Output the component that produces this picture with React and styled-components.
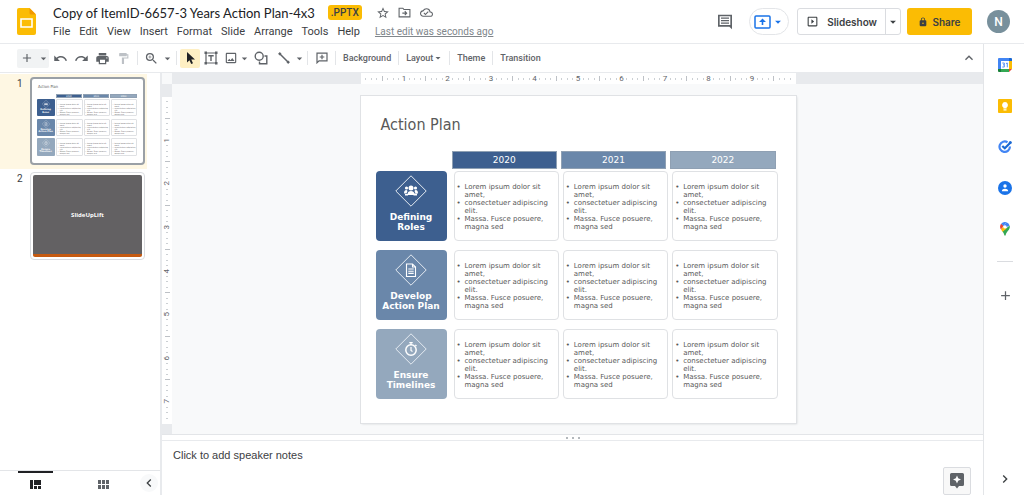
import React, { useState } from 'react';
import styled, { createGlobalStyle, css } from 'styled-components';
import {
  MdAdd,
  MdArrowDropDown,
  MdUndo,
  MdRedo,
  MdPrint,
  MdFormatPaint,
  MdZoomIn,
  MdOutlineImage,
  MdStarBorder,
  MdOutlineCloudDone,
  MdKeyboardArrowUp,
  MdChevronLeft,
  MdChevronRight,
  MdLock,
  MdOutlineSlideshow,
} from 'react-icons/md';

const GlobalStyle = createGlobalStyle`
  * {
    box-sizing: border-box;
  }
  body {
    margin: 0;
    background: #fff;
    color: #3c4043;
    font-family: Roboto, sans-serif;
  }
  button {
    border: none;
    padding: 0;
    margin: 0;
    background: none;
    color: inherit;
    font: inherit;
    cursor: pointer;
  }
  svg {
    display: block;
    flex-shrink: 0;
  }
`;

const Page = styled.div`
  display: flex;
  flex-direction: column;
  height: 100vh;
  overflow: hidden;
`;

// ---- Header ----
const Header = styled.header`
  display: flex;
  align-items: center;
  height: 44px;
  padding: 0 14px 0 17px;
  border-bottom: 1px solid #e8eaed;
  flex-shrink: 0;
`;

const DocInfo = styled.div`
  flex: 1;
  min-width: 0;
  padding-left: 17px;
`;

const TitleRow = styled.div`
  display: flex;
  align-items: center;
  height: 20px;
  white-space: nowrap;
`;

const DocTitle = styled.h1`
  margin: 0;
  font-family: Lato, sans-serif;
  font-size: 13px;
  font-weight: 400;
  line-height: 20px;
  color: #202124;
`;

const FileBadge = styled.span`
  margin: 0 14px 0 13px;
  padding: 0 3px;
  border-radius: 3px;
  background: #fbbc04;
  color: #3c4043;
  font-size: 10px;
  font-weight: 500;
  line-height: 15px;
`;

const TitleAction = styled.button`
  width: 14px;
  margin-right: 8px;
  color: #5f6368;
`;

const MenuRow = styled.nav`
  display: flex;
  align-items: center;
  gap: 9px;
  height: 18px;
  font-size: 11px;
  line-height: 18px;
  white-space: nowrap;
`;

const LastEdit = styled.a`
  margin-left: 6px;
  color: #80868b;
  font-size: 10px;
  text-decoration: underline;
`;

const HeaderActions = styled.div`
  display: flex;
  align-items: center;
  gap: 6px;
  color: #3c4043;
  font-family: Inter, sans-serif;
  font-size: 10px;
  font-weight: 600;
`;

const CommentButton = styled.button`
  margin-right: 10px;
  color: #5f6368;
`;

const PresentButton = styled.button`
  display: flex;
  align-items: center;
  justify-content: center;
  width: 40px;
  height: 27px;
  margin-right: 2px;
  border: 1px solid #e3e5e8;
  border-radius: 14px;
  color: #1a73e8;
`;

const SplitButton = styled.div`
  display: flex;
  height: 27px;
  border: 1px solid #dadce0;
  border-radius: 3px;
`;

const SlideshowButton = styled.button`
  display: flex;
  align-items: center;
  gap: 8px;
  padding: 0 8px;
`;

const SlideshowMenuButton = styled.button`
  display: flex;
  align-items: center;
  justify-content: center;
  width: 15px;
  border-left: 1px solid #dadce0;
`;

const ShareButton = styled.button`
  display: flex;
  align-items: center;
  justify-content: center;
  gap: 4px;
  width: 65px;
  height: 27px;
  border-radius: 3px;
  background: #fbbc04;
`;

const Avatar = styled.button`
  width: 23px;
  height: 23px;
  margin-left: 9px;
  border-radius: 50%;
  background: #78909c;
  color: #fff;
  font-family: Roboto, sans-serif;
  font-size: 12px;
  font-weight: 500;
`;

// ---- Toolbar ----
const Body = styled.div`
  display: flex;
  flex: 1;
  min-height: 0;
`;

const Main = styled.div`
  display: flex;
  flex-direction: column;
  flex: 1;
  min-width: 0;
`;

const Toolbar = styled.div`
  display: flex;
  align-items: center;
  height: 29px;
  padding: 0 6px 0 17px;
  border-bottom: 1px solid #e8eaed;
  color: #5f6368;
  font-size: 9px;
  font-weight: 500;
  flex-shrink: 0;
`;

const ToolButton = styled.button`
  display: flex;
  align-items: center;
  justify-content: center;
  width: ${(props) => props.$width || 21}px;
  height: 19px;
  border-radius: 2px;
  color: ${(props) => (props.$faded ? '#bdc1c6' : '#5f6368')};
  background: ${(props) => props.$background || 'none'};
`;

const NewSlide = styled.div`
  display: flex;
  margin-right: 1px;
  background: #f1f3f4;
  border-radius: 2px;
`;

const Separator = styled.span`
  width: 1px;
  height: 14px;
  margin: 0 3px;
  background: #e3e5e8;
`;

const TextTool = styled.button`
  display: flex;
  align-items: center;
  height: 19px;
  padding: 0 4px;
  svg {
    margin: 0 -2px 0 -1px;
  }
`;

const Spacer = styled.span`
  flex: 1;
`;

// ---- Filmstrip ----
const Filmstrip = styled.aside`
  display: flex;
  flex-direction: column;
  width: 162px;
  border-right: 2px solid #e8eaed;
  flex-shrink: 0;
`;

const ThumbList = styled.div`
  flex: 1;
  padding-top: 1px;
  overflow: hidden;
`;

const ThumbRow = styled.div`
  display: flex;
  align-items: flex-start;
  width: 147px;
  height: 95px;
  padding-top: 3px;
  background: ${(props) => (props.$selected ? '#fef7e3' : 'none')};
`;

const ThumbNumber = styled.span`
  width: 30px;
  padding-left: 17px;
  font-size: 10px;
  line-height: 14px;
  color: #3c4043;
`;

const ThumbFrame = styled.button`
  padding: ${(props) => (props.$selected ? 1 : 2)}px;
  border: ${(props) => (props.$selected ? '2px solid #9aa0a6' : '1px solid #dadce0')};
  border-radius: 4px;
  background: #fff;
  text-align: left;
`;

const ThumbCanvas = styled.div`
  width: 109px;
  height: 82px;
  overflow: hidden;
`;

const MiniScale = styled.div`
  zoom: 0.25;
`;

const BrandSlide = styled.div`
  display: flex;
  align-items: center;
  justify-content: center;
  height: 100%;
  border-bottom: 3px solid #c55a11;
  border-radius: 2px;
  background: #636163;
  color: #fff;
  font-family: 'Open Sans', sans-serif;
  font-size: 6px;
  font-weight: 700;
`;

const ViewSwitch = styled.div`
  display: flex;
  align-items: center;
  gap: 34px;
  height: 25px;
  border-top: 1px solid #e3e5e8;
  padding-left: 18px;
`;

const ViewButton = styled.button`
  display: flex;
  align-items: center;
  justify-content: center;
  width: 35px;
  height: 25px;
  border-top: 2px solid ${(props) => (props.$active ? '#202124' : 'transparent')};
  color: ${(props) => (props.$active ? '#202124' : '#5f6368')};
`;

const CollapseButton = styled.button`
  display: flex;
  align-items: center;
  justify-content: center;
  width: 18px;
  height: 18px;
  margin: 0 2px 0 -15px;
  border-radius: 50%;
  background: #f8f9fa;
  color: #3c4043;
`;

// ---- Canvas and rulers ----
const Workspace = styled.div`
  display: flex;
  flex: 1;
  min-height: 0;
`;

const Editor = styled.main`
  display: flex;
  flex-direction: column;
  flex: 1;
  min-width: 0;
`;

const CanvasGrid = styled.div`
  display: grid;
  grid-template-columns: 10px 1fr;
  grid-template-rows: 11px 1fr;
  flex: 1;
  min-height: 0;
  background: #f8f9fa;
`;

const RulerTrack = styled.div`
  display: flex;
  flex-direction: ${(props) => (props.$vertical ? 'column' : 'row')};
  justify-content: center;
  min-width: 0;
  min-height: 0;
  padding: ${(props) => (props.$vertical ? '2px 0 0' : '0 0 0 1px')};
  background: #e8eaed;
`;

const RulerScale = styled.div`
  display: grid;
  background: #fff;
  color: #5f6368;
  font-size: 8px;
  line-height: 10px;
  ${(props) =>
    props.$vertical
      ? css`
          grid-template-rows: 1fr repeat(59, 2fr) 1fr;
          height: 327px;
        `
      : css`
          grid-template-columns: 1fr repeat(79, 2fr) 1fr;
          width: 435px;
        `}
`;

const RulerSlot = styled.span`
  display: flex;
  align-items: center;
  justify-content: center;
  min-width: 0;
  min-height: 0;
  ${(props) => props.$vertical && 'writing-mode: sideways-lr; height: 100%;'}
`;

const Tick = styled.i`
  background: ${(props) => (props.$long ? '#bdc1c6' : '#ccd0d4')};
  width: ${(props) => (props.$vertical ? (props.$long ? 5 : 2) : 1)}px;
  height: ${(props) => (props.$vertical ? 1 : props.$long ? 5 : 2)}px;
  flex-shrink: 0;
`;

const Stage = styled.div`
  display: flex;
  align-items: center;
  justify-content: center;
  min-height: 0;
  padding: 1px 0 0 1px;
  overflow: hidden;
`;

const Splitter = styled.div`
  display: flex;
  align-items: center;
  justify-content: center;
  gap: 4px;
  height: 7px;
  border-top: 1px solid #e3e5e8;
  border-bottom: 1px solid #e8eaed;
  flex-shrink: 0;
`;

const GripDot = styled.i`
  width: 2px;
  height: 2px;
  border-radius: 50%;
  background: #9aa0a6;
`;

const Notes = styled.section`
  display: flex;
  align-items: flex-start;
  justify-content: space-between;
  height: 54px;
  padding: 0 12px 0 11px;
  flex-shrink: 0;
`;

const NotesInput = styled.textarea`
  flex: 1;
  height: 40px;
  padding: 8px 0;
  border: none;
  outline: none;
  resize: none;
  font-family: 'Liberation Sans', sans-serif;
  font-size: 11px;
  line-height: 13px;
  &::placeholder {
    color: #3c4043;
  }
`;

const ExploreButton = styled.button`
  display: flex;
  align-items: center;
  justify-content: center;
  align-self: flex-end;
  width: 28px;
  height: 28px;
  border: 1px solid #dadce0;
  border-radius: 2px;
  background: #f8f8f8;
  color: #5f6368;
`;

// ---- Slide ----
const SlidePaper = styled.article`
  width: 435px;
  aspect-ratio: 4 / 3;
  padding: 17px 16px 0 15px;
  background: #fff;
  box-shadow: ${(props) => (props.$flat ? 'none' : '0 0 0 1px #e0e2e5, 1px 1px 2px #d0d3d6')};
  color: #595959;
  font-family: 'DejaVu Sans', sans-serif;
`;

const SlideTitle = styled.h2`
  margin: 0 0 15px 5px;
  font-family: 'DejaVu Sans Condensed', 'DejaVu Sans', sans-serif;
  font-size: 16px;
  font-weight: 400;
  line-height: 23px;
`;

const PlanTable = styled.table`
  width: 100%;
  table-layout: fixed;
  border-collapse: collapse;
  th,
  td {
    padding: 0;
  }
`;

const PhaseColumn = styled.col`
  width: 76px;
`;

const YearHeading = styled.div`
  height: 18px;
  margin: 0 4px 2px 0;
  border: 1px solid #8fa0b3;
  background: ${(props) => props.$color};
  color: #fff;
  font-size: 9px;
  font-weight: 400;
  line-height: 17px;
  text-align: center;
`;

const Phase = styled.div`
  display: flex;
  flex-direction: column;
  align-items: center;
  width: 71px;
  height: 70px;
  margin-bottom: 9px;
  padding-top: 4px;
  border-radius: 4px;
  background: ${(props) => props.$color};
  color: #fff;
  font-size: 9px;
  font-weight: 700;
  line-height: 10px;
  text-align: center;
  white-space: pre-line;
  svg {
    margin-bottom: 5px;
  }
`;

const Card = styled.div`
  height: 70px;
  margin: 0 2px 9px 2px;
  padding: 11px 0 0 10px;
  border: 1px solid #dfe1e4;
  border-radius: 4px;
`;

const Bullets = styled.ul`
  margin: 0;
  padding: 0;
  list-style: none;
  font-size: 7px;
  line-height: 8px;
  white-space: pre-line;
`;

const Bullet = styled.li`
  display: flex;
  &::before {
    content: '•';
    width: 8px;
    margin-left: -8px;
  }
`;

// ---- Side panel ----
const SidePanel = styled.aside`
  display: flex;
  flex-direction: column;
  align-items: center;
  width: 41px;
  padding: 13px 0 8px 2px;
  border-left: 1px solid #e3e5e8;
  flex-shrink: 0;
`;

const PanelButton = styled.button`
  display: flex;
  align-items: center;
  justify-content: center;
  height: 16px;
  margin-bottom: 25px;
  color: #5f6368;
`;

const PanelDivider = styled.span`
  width: 16px;
  height: 1px;
  margin: -1px 0 25px;
  background: #dadce0;
`;

function SlidesLogo() {
  return (
    <svg width="19" height="27" viewBox="0 0 19 27">
      <path fill="#fbbc04" d="M2 0h10.500L19 6.500V25a2 2 0 0 1-2 2H2a2 2 0 0 1-2-2V2a2 2 0 0 1 2-2z" />
      <path fill="#f29900" d="M12.500 0 19 6.500h-5a1.500 1.500 0 0 1-1.500-1.500z" />
      <path fill="none" stroke="#fff" strokeWidth="1.600" d="M4 11h11v8H4z" />
    </svg>
  );
}

function MoveFolderIcon() {
  return (
    <svg width="13" height="13" viewBox="0 0 24 24" fill="none" stroke="currentColor" strokeWidth="2">
      <path d="M2 4h7l2 2.500h11V20H2z" />
      <path d="M8 13.200h7M12.500 9.700l3.500 3.500-3.500 3.500" />
    </svg>
  );
}

function CommentIcon() {
  return (
    <svg width="16" height="16" viewBox="0 0 24 24" fill="currentColor">
      <path d="M1.500 1h21V23l-4-4h-17zM4 3.500V16.500h16V3.500z" fillRule="evenodd" />
      <path d="M6 5.300h12v2H6zM6 9h12v2H6zM6 12.700h12v2H6z" />
    </svg>
  );
}

function PresentIcon() {
  return (
    <svg width="17" height="14" viewBox="0 0 17 14">
      <rect x="1" y="1" width="15" height="12" rx="1" fill="none" stroke="currentColor" strokeWidth="1.500" />
      <path fill="currentColor" d="M8.500 3.500 12 7H9.300v3H7.700V7H5z" />
    </svg>
  );
}

function CursorIcon() {
  return (
    <svg width="11" height="14" viewBox="0 0 11 14">
      <path fill="#202124" d="M2 1v10.500l2.500-2.300 1.700 3.800 1.800-.8-1.700-3.700H10z" />
    </svg>
  );
}

function TextBoxIcon() {
  return (
    <svg width="14" height="14" viewBox="0 0 14 14" fill="none" stroke="currentColor">
      <path strokeWidth="1.200" d="M2 2h10v10H2z" />
      <path strokeWidth="1.400" d="M4.300 4.700h5.400M7 4.700V10" />
      <path fill="currentColor" stroke="none" d="M.5.500h2.500v2.500H.5zM11 .5h2.500v2.500H11zM.5 11h2.500v2.500H.5zM11 11h2.500v2.500H11z" />
    </svg>
  );
}

function ShapeIcon() {
  return (
    <svg width="14" height="14" viewBox="0 0 14 14" fill="none" stroke="currentColor" strokeWidth="1.400">
      <circle cx="5.200" cy="5.200" r="4" />
      <path d="M10.500 5H12.800v7.800H5.500v-2.200" />
    </svg>
  );
}

function LineIcon() {
  return (
    <svg width="12" height="12" viewBox="0 0 12 12" stroke="currentColor" fill="currentColor">
      <path strokeWidth="1.500" d="M1.500 1.500 10.500 10.500" />
      <circle cx="1.800" cy="1.800" r="1" />
      <circle cx="10.200" cy="10.200" r="1" />
    </svg>
  );
}

function AddCommentIcon() {
  return (
    <svg width="12" height="12" viewBox="0 0 12 12" fill="none" stroke="currentColor">
      <path strokeWidth="1.200" d="M1 1.200h10v7.600H3L1 10.800z" />
      <path strokeWidth="1.200" d="M6 2.700v4.600M3.700 5h4.600" />
    </svg>
  );
}

function FilmstripIcon() {
  return (
    <svg width="11" height="9" viewBox="0 0 11 9" fill="currentColor">
      <path d="M0 0h3v9H0zM4 0h7v5H4zM4 6h3v3H4zM8 6h3v3H8z" />
    </svg>
  );
}

function GridIcon() {
  return (
    <svg width="11" height="9" viewBox="0 0 11 9" fill="currentColor">
      <path d="M0 0h3v4H0zM4 0h3v4H4zM8 0h3v4H8zM0 5h3v4H0zM4 5h3v4H4zM8 5h3v4H8z" />
    </svg>
  );
}

function ExploreIcon() {
  return (
    <svg width="14" height="16" viewBox="0 0 14 16">
      <path fill="currentColor" d="M1.500 0h11A1.500 1.500 0 0 1 14 1.500v10a1.500 1.500 0 0 1-1.500 1.500H9l-2 2.500L5 13H1.500A1.500 1.500 0 0 1 0 11.500v-10A1.500 1.500 0 0 1 1.500 0z" />
      <path fill="#fff" d="m7 2.500 1.200 2.800L11 6.500 8.200 7.700 7 10.500 5.800 7.700 3 6.500l2.800-1.200z" />
    </svg>
  );
}

function PhaseIcon({ kind }) {
  return (
    <svg width="32" height="32" viewBox="0 0 32 32">
      <path d="M16 .8 31.200 16 16 31.200.8 16z" fill="none" stroke="#e3e9f0" strokeWidth="1" />
      {kind === 'team' && (
        <g fill="#fff">
          <circle cx="16" cy="13" r="2.500" />
          <circle cx="11.500" cy="13" r="1.600" />
          <circle cx="20.500" cy="13" r="1.600" />
          <path d="M12.500 19c0-4 7-4 7 0v1h-7zM9 18.500c0-4 3-4 3.500-2.500l-1 2.500zM23 18.500c0-4-3-4-3.500-2.500l1 2.500z" />
          <path d="M10 19h3v1.500h-3zM18.500 18.500h3.500v2h-3.500z" />
        </g>
      )}
      {kind === 'document' && (
        <g fill="none" stroke="#fff" strokeWidth="1.100">
          <path d="M11.500 10h6l3 3v9.500h-9z" />
          <path d="M17.500 10v3h3M13.300 15h5.400M13.300 17.200h5.400M13.300 19.400h5.400" />
        </g>
      )}
      {kind === 'timer' && (
        <g fill="none" stroke="#fff">
          <circle cx="16" cy="17" r="5.200" strokeWidth="1.500" />
          <path strokeWidth="1.200" d="M14.300 9.700h3.400M16 10v2M16 14v3.500l1.500 1M20.300 11.800l1.200 1.200" />
        </g>
      )}
    </svg>
  );
}

function CalendarIcon() {
  return (
    <svg width="14" height="14" viewBox="0 0 14 14">
      <path fill="#4285f4" d="M1 0h10v3H3v8H0V1a1 1 0 0 1 1-1z" />
      <path fill="#1967d2" d="M11 0h2a1 1 0 0 1 1 1v2h-3z" />
      <path fill="#fbbc04" d="M11 3h3v8h-3z" />
      <path fill="#34a853" d="M3 11h8v3H3z" />
      <path fill="#188038" d="M0 11h3v3H1a1 1 0 0 1-1-1z" />
      <path fill="#ea4335" d="M11 11h3l-3 3z" />
      <path fill="#fff" d="M3 3h8v8H3z" />
      <path fill="none" stroke="#4285f4" strokeWidth=".9" d="M4.300 5h2v1.800H5M6.300 6.800V9h-2M8 5.600 9.300 5v4.300" />
    </svg>
  );
}

function KeepIcon() {
  return (
    <svg width="14" height="14" viewBox="0 0 14 14">
      <rect width="14" height="14" rx="1" fill="#fbbc04" />
      <path fill="#fff" d="M7 3a3 3 0 0 1 1.600 5.500V9.500H5.400V8.500A3 3 0 0 1 7 3zM5.500 10.300h3v1.200h-3z" />
    </svg>
  );
}

function TasksIcon() {
  return (
    <svg width="14" height="14" viewBox="0 0 14 14" fill="none">
      <path stroke="#4285f4" strokeWidth="2.200" d="M9.500 2.300A5.200 5.200 0 1 0 11.900 6.500" />
      <path stroke="#1967d2" strokeWidth="2.200" d="M4.300 6l2.500 2.300 5.500-5.500" />
      <circle cx="12.300" cy="2.500" r="1.500" fill="#1967d2" />
    </svg>
  );
}

function ContactsIcon() {
  return (
    <svg width="14" height="14" viewBox="0 0 14 14">
      <circle cx="7" cy="7" r="7" fill="#1a73e8" />
      <circle cx="7" cy="5" r="1.700" fill="#fff" />
      <path fill="#fff" d="M3.800 10.300c0-3.300 6.400-3.300 6.400 0z" />
    </svg>
  );
}

function MapsIcon() {
  return (
    <svg width="10" height="14" viewBox="0 0 10 14">
      <path fill="#34a853" d="M9.600 3.600C10.800 8 6.500 9 5.700 13c-.2 1-1.200 1-1.400 0-.3-1.500-1-2.700-1.900-3.600z" />
      <path fill="#fbbc04" d="m1 7.600 2.300-3L6.500 6.400 2.600 9.800z" />
      <path fill="#ea4335" d="M1.200 1.800 3.600 3.800 1 7.600C-.3 5.600-.2 3.300 1.200 1.800z" />
      <path fill="#4285f4" d="M6.500.3 3.500 4 1.200 1.800A4.900 4.900 0 0 1 6.500.3z" />
      <path fill="#4285f4" d="M6.500.3a4.900 4.900 0 0 1 3.100 3.300L6 5.500 3.500 4z" />
      <circle cx="5" cy="4.900" r="1.700" fill="#fff" />
    </svg>
  );
}

const menus = ['File', 'Edit', 'View', 'Insert', 'Format', 'Slide', 'Arrange', 'Tools', 'Help'];

const years = [
  { label: '2020', color: '#3d5f8f' },
  { label: '2021', color: '#6a87aa' },
  { label: '2022', color: '#94a8bd' },
];

const phases = [
  { label: 'Defining\nRoles', icon: 'team', color: '#3d5f8f' },
  { label: 'Develop\nAction Plan', icon: 'document', color: '#6a87aa' },
  { label: 'Ensure\nTimelines', icon: 'timer', color: '#94a8bd' },
];

const bullets = ['Lorem ipsum dolor sit\namet,', 'consectetuer adipiscing\nelit.', 'Massa. Fusce posuere,\nmagna sed'];

const panelApps = [
  { name: 'Calendar', Icon: CalendarIcon },
  { name: 'Keep', Icon: KeepIcon },
  { name: 'Tasks', Icon: TasksIcon },
  { name: 'Contacts', Icon: ContactsIcon },
  { name: 'Maps', Icon: MapsIcon },
];

// Eighths of an inch, with a number on every whole inch
function Ruler({ inches, vertical }) {
  const slots = Array.from({ length: inches * 8 - 1 }, (_, i) => i + 1);
  return (
    <RulerTrack $vertical={vertical}>
      <RulerScale $vertical={vertical}>
        <span />
        {slots.map((n) => (
          <RulerSlot key={n} $vertical={vertical}>
            {n % 8 === 0 ? n / 8 : <Tick $vertical={vertical} $long={n % 4 === 0} />}
          </RulerSlot>
        ))}
        <span />
      </RulerScale>
    </RulerTrack>
  );
}

function ActionPlanSlide({ flat }) {
  return (
    <SlidePaper $flat={flat}>
      <SlideTitle>Action Plan</SlideTitle>
      <PlanTable>
        <colgroup>
          <PhaseColumn />
          <col />
          <col />
          <col />
        </colgroup>
        <thead>
          <tr>
            <td />
            {years.map((year) => (
              <th key={year.label} scope="col">
                <YearHeading $color={year.color}>{year.label}</YearHeading>
              </th>
            ))}
          </tr>
        </thead>
        <tbody>
          {phases.map((phase) => (
            <tr key={phase.label}>
              <th scope="row">
                <Phase $color={phase.color}>
                  <PhaseIcon kind={phase.icon} />
                  {phase.label}
                </Phase>
              </th>
              {years.map((year) => (
                <td key={year.label}>
                  <Card>
                    <Bullets>
                      {bullets.map((text) => (
                        <Bullet key={text}>{text}</Bullet>
                      ))}
                    </Bullets>
                  </Card>
                </td>
              ))}
            </tr>
          ))}
        </tbody>
      </PlanTable>
    </SlidePaper>
  );
}

export default function App() {
  const [notes, setNotes] = useState('');

  return (
    <Page>
      <GlobalStyle />
      <Header>
        <SlidesLogo />
        <DocInfo>
          <TitleRow>
            <DocTitle>Copy of ItemID-6657-3 Years Action Plan-4x3</DocTitle>
            <FileBadge>.PPTX</FileBadge>
            <TitleAction aria-label="Star"><MdStarBorder size={14} /></TitleAction>
            <TitleAction aria-label="Move"><MoveFolderIcon /></TitleAction>
            <TitleAction aria-label="Document status"><MdOutlineCloudDone size={13} /></TitleAction>
          </TitleRow>
          <MenuRow>
            {menus.map((menu) => (
              <button key={menu}>{menu}</button>
            ))}
            <LastEdit href="#history">Last edit was seconds ago</LastEdit>
          </MenuRow>
        </DocInfo>
        <HeaderActions>
          <CommentButton aria-label="Comments"><CommentIcon /></CommentButton>
          <PresentButton aria-label="Present to a meeting">
            <PresentIcon />
            <MdArrowDropDown size={14} />
          </PresentButton>
          <SplitButton>
            <SlideshowButton>
              <MdOutlineSlideshow size={13} />
              Slideshow
            </SlideshowButton>
            <SlideshowMenuButton aria-label="Slideshow options"><MdArrowDropDown size={14} /></SlideshowMenuButton>
          </SplitButton>
          <ShareButton>
            <MdLock size={10} />
            Share
          </ShareButton>
          <Avatar aria-label="Account">N</Avatar>
        </HeaderActions>
      </Header>

      <Body>
        <Main>
          <Toolbar>
            <NewSlide>
              <ToolButton $width={20} aria-label="New slide"><MdAdd size={14} /></ToolButton>
              <ToolButton $width={12} aria-label="Slide layouts"><MdArrowDropDown size={13} /></ToolButton>
            </NewSlide>
            <ToolButton aria-label="Undo"><MdUndo size={15} /></ToolButton>
            <ToolButton aria-label="Redo"><MdRedo size={15} /></ToolButton>
            <ToolButton aria-label="Print"><MdPrint size={15} /></ToolButton>
            <ToolButton $faded aria-label="Paint format"><MdFormatPaint size={13} /></ToolButton>
            <Separator />
            <ToolButton $width={20} aria-label="Zoom"><MdZoomIn size={15} /></ToolButton>
            <ToolButton $width={12} aria-label="Zoom options"><MdArrowDropDown size={13} /></ToolButton>
            <Separator />
            <ToolButton $width={20} $background="#feefc3" aria-label="Select"><CursorIcon /></ToolButton>
            <ToolButton aria-label="Text box"><TextBoxIcon /></ToolButton>
            <ToolButton $width={19} aria-label="Insert image"><MdOutlineImage size={14} /></ToolButton>
            <ToolButton $width={8} aria-label="Image options"><MdArrowDropDown size={13} /></ToolButton>
            <ToolButton $width={26} aria-label="Shape"><ShapeIcon /></ToolButton>
            <ToolButton $width={20} aria-label="Line"><LineIcon /></ToolButton>
            <ToolButton $width={10} aria-label="Line options"><MdArrowDropDown size={13} /></ToolButton>
            <Separator />
            <ToolButton aria-label="Add comment"><AddCommentIcon /></ToolButton>
            <Separator />
            <TextTool>Background</TextTool>
            <Separator />
            <TextTool>
              Layout
              <MdArrowDropDown size={12} />
            </TextTool>
            <Separator />
            <TextTool>Theme</TextTool>
            <Separator />
            <TextTool>Transition</TextTool>
            <Spacer />
            <ToolButton $width={16} aria-label="Hide the menus"><MdKeyboardArrowUp size={16} /></ToolButton>
          </Toolbar>

          <Workspace>
            <Filmstrip>
              <ThumbList>
                <ThumbRow $selected>
                  <ThumbNumber>1</ThumbNumber>
                  <ThumbFrame $selected aria-label="Slide 1">
                    <ThumbCanvas>
                      <MiniScale>
                        <ActionPlanSlide flat />
                      </MiniScale>
                    </ThumbCanvas>
                  </ThumbFrame>
                </ThumbRow>
                <ThumbRow>
                  <ThumbNumber>2</ThumbNumber>
                  <ThumbFrame aria-label="Slide 2">
                    <ThumbCanvas>
                      <BrandSlide>SlideUpLift</BrandSlide>
                    </ThumbCanvas>
                  </ThumbFrame>
                </ThumbRow>
              </ThumbList>
              <ViewSwitch>
                <ViewButton $active aria-label="Filmstrip view"><FilmstripIcon /></ViewButton>
                <ViewButton aria-label="Grid view"><GridIcon /></ViewButton>
                <CollapseButton aria-label="Hide filmstrip"><MdChevronLeft size={16} /></CollapseButton>
              </ViewSwitch>
            </Filmstrip>

            <Editor>
              <CanvasGrid>
                <span />
                <Ruler inches={10} />
                <Ruler inches={7.5} vertical />
                <Stage>
                  <ActionPlanSlide />
                </Stage>
              </CanvasGrid>
              <Splitter>
                <GripDot />
                <GripDot />
                <GripDot />
              </Splitter>
              <Notes>
                <NotesInput
                  aria-label="Speaker notes"
                  placeholder="Click to add speaker notes"
                  value={notes}
                  onChange={(e) => setNotes(e.target.value)}
                />
                <ExploreButton aria-label="Explore"><ExploreIcon /></ExploreButton>
              </Notes>
            </Editor>
          </Workspace>
        </Main>

        <SidePanel>
          {panelApps.map(({ name, Icon }) => (
            <PanelButton key={name} aria-label={name}><Icon /></PanelButton>
          ))}
          <PanelDivider />
          <PanelButton aria-label="Get add-ons"><MdAdd size={15} /></PanelButton>
          <Spacer />
          <button aria-label="Hide side panel"><MdChevronRight size={16} /></button>
        </SidePanel>
      </Body>
    </Page>
  );
}
